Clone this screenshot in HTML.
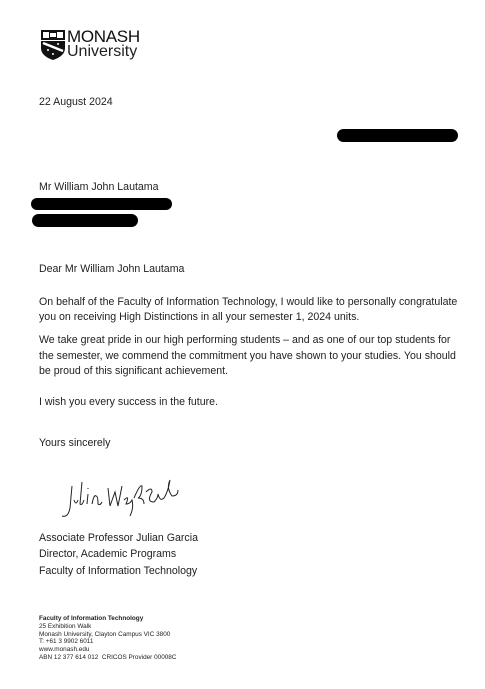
<!DOCTYPE html>
<html><head><style>
body{margin:0;width:485px;height:689px;background:#fff;position:relative;overflow:hidden;font-family:"Liberation Sans",Arial,sans-serif;color:#222}
.t{position:absolute;left:39px;font-size:10.6px;white-space:nowrap;line-height:13px}
.f{position:absolute;left:39px;font-size:6.4px;line-height:7.8px;color:#222;white-space:nowrap}
.r{position:absolute;background:#000;border-radius:8px}
</style></head><body>
<svg style="position:absolute;left:41px;top:30px" width="24" height="30" viewBox="0 0 24 30">
<rect x="0" y="0" width="24" height="10" fill="#111"/>
<rect x="2" y="2" width="6" height="6" fill="#fff"/><rect x="16" y="2" width="6" height="6" fill="#fff"/>
<rect x="9" y="3" width="6" height="4" fill="#fff"/>
<path d="M0 11 H24 V18 Q24 26 12 30 Q0 26 0 18 Z" fill="#111"/>
<path d="M2 13 L22 21" stroke="#fff" stroke-width="2.5"/>
<circle cx="7" cy="20" r="1" fill="#fff"/><circle cx="12" cy="24" r="1" fill="#fff"/><circle cx="17" cy="14" r="1" fill="#fff"/>
</svg>
<div style="position:absolute;left:67px;top:28px;font-size:17px;line-height:17px;color:#111;letter-spacing:-0.3px">MONASH</div>
<div style="position:absolute;left:67px;top:43px;font-size:16px;line-height:17px;color:#222">University</div>
<div class="t" style="top:96px">22 August 2024</div>
<div class="r" style="left:337px;top:129px;width:121px;height:13px;border-radius:7px"></div>
<div class="t" style="top:181px">Mr William John Lautama</div>
<div class="r" style="left:31px;top:198px;width:141px;height:12px"></div>
<div class="r" style="left:32px;top:214px;width:106px;height:13px"></div>
<div class="t" style="top:263px">Dear Mr William John Lautama</div>
<div class="t" style="top:296px">On behalf of the Faculty of Information Technology, I would like to personally congratulate</div>
<div class="t" style="top:311px">you on receiving High Distinctions in all your semester 1, 2024 units.</div>
<div class="t" style="top:334px">We take great pride in our high performing students – and as one of our top students for</div>
<div class="t" style="top:350px">the semester, we commend the commitment you have shown to your studies. You should</div>
<div class="t" style="top:365px">be proud of this significant achievement.</div>
<div class="t" style="top:396px">I wish you every success in the future.</div>
<div class="t" style="top:437px">Yours sincerely</div>
<svg style="position:absolute;left:60px;top:478px" width="125" height="42" viewBox="0 0 125 42" fill="none" stroke="#222" stroke-width="1">
<path d="M12 8 L10 30 Q8 40 2 38 M14 22 q2 6 4 0 M22 4 L20 26 q2 2 4-4 M28 16 l-1 10 M28 10 v1 M32 26 q2-10 4-8 q2 0 2 8 q2 2 4-2"/>
<path d="M48 10 L50 28 L55 14 L58 28 L62 8 M64 22 q6-6 2 4 q4 0 6-4 q2 8 -2 16 M74 20 q6-14 8-12 q0 10 -4 12 q6 0 6 6 M86 14 q6-6 6 0 q-6 10 2 10 q4-4 4-8 q2 8 6 4 q4-6 6-18 q-4 8 2 16 q6 0 6-6"/>
</svg>
<div class="t" style="top:532px">Associate Professor Julian Garcia</div>
<div class="t" style="top:548px">Director, Academic Programs</div>
<div class="t" style="top:565px">Faculty of Information Technology</div>
<div class="f" style="top:615px;font-weight:bold">Faculty of Information Technology</div>
<div class="f" style="top:622.8px">25 Exhibition Walk</div>
<div class="f" style="top:630.6px">Monash University, Clayton Campus VIC 3800</div>
<div class="f" style="top:638.4px">T: +61 3 9902 6011</div>
<div class="f" style="top:646.2px">www.monash.edu</div>
<div class="f" style="top:654px">ABN 12 377 614 012&nbsp; CRICOS Provider 00008C</div>
</body></html>
